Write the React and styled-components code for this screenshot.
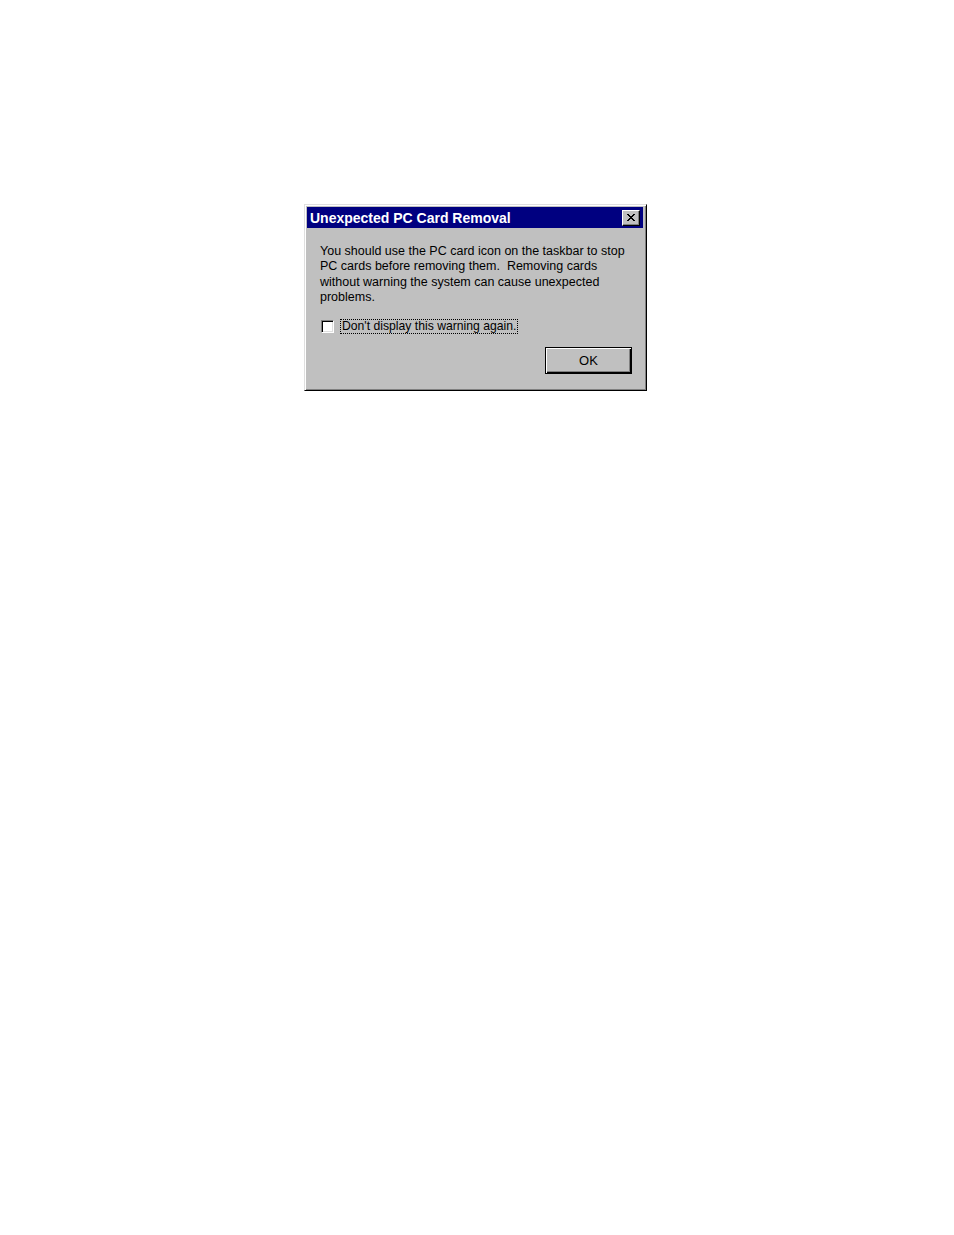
import React from 'react';
import styled, { createGlobalStyle } from 'styled-components';

const GlobalStyle = createGlobalStyle`
  html, body {
    margin: 0;
    padding: 0;
    background: #ffffff;
  }
`;

const Page = styled.div`
  width: 954px;
  height: 1235px;
  padding: 204px 0 0 304px;
  box-sizing: border-box;
  font-family: "Liberation Sans", Arial, sans-serif;
`;

const Window = styled.div`
  width: 343px;
  height: 187px;
  box-sizing: border-box;
  background: #c0c0c0;
  border: 1px solid;
  border-color: #dfdfdf #000000 #000000 #dfdfdf;
  box-shadow: inset 1px 1px 0 #ffffff, inset -1px -1px 0 #808080;
  padding: 2px 3px 3px 2px;
  display: flex;
  flex-direction: column;
`;

const TitleBar = styled.div`
  height: 21px;
  background: #000080;
  display: flex;
  align-items: center;
  justify-content: space-between;
  padding: 0 3px;
`;

const Title = styled.span`
  color: #ffffff;
  font-weight: bold;
  font-size: 14px;
`;

const CloseButton = styled.div`
  width: 18px;
  height: 16px;
  box-sizing: border-box;
  background: #c0c0c0;
  border: 1px solid;
  border-color: #ffffff #000000 #000000 #ffffff;
  box-shadow: inset -1px -1px 0 #808080;
  display: flex;
  align-items: center;
  justify-content: center;
`;

const Body = styled.div`
  flex: 1;
  display: flex;
  flex-direction: column;
  padding: 16px 0 0 13px;
`;

const Message = styled.p`
  margin: 0;
  width: 316px;
  font-size: 12.5px;
  line-height: 15.3px;
  color: #000000;
`;

const CheckRow = styled.label`
  display: flex;
  align-items: center;
  gap: 7px;
  margin-top: 15px;
  margin-left: 1px;
`;

const CheckBox = styled.span`
  width: 13px;
  height: 13px;
  box-sizing: border-box;
  background: #ffffff;
  border: 1px solid;
  border-color: #808080 #ffffff #ffffff #808080;
  box-shadow: inset 1px 1px 0 #000000, inset -1px -1px 0 #dfdfdf;
`;

const CheckLabel = styled.span`
  font-size: 12.2px;
  line-height: 13px;
  outline: 1px dotted #000000;
  padding: 0 1px;
`;

const ButtonRow = styled.div`
  display: flex;
  justify-content: flex-end;
  margin-top: 14px;
  padding-right: 11px;
`;

const DefaultButton = styled.button`
  width: 87px;
  height: 27px;
  box-sizing: border-box;
  background: #c0c0c0;
  border: 1px solid #000000;
  padding: 0;
  font-family: "Liberation Sans", Arial, sans-serif;
  font-size: 13px;
  color: #000000;
  box-shadow: inset 1px 1px 0 #ffffff, inset -1px -1px 0 #000000, inset -2px -2px 0 #808080;
`;

const X_ROWS = [
  'XX....XX',
  '.XX..XX.',
  '..XXXX..',
  '...XX...',
  '..XXXX..',
  '.XX..XX.',
  'XX....XX',
];

function CloseIcon() {
  return (
    <svg width="8" height="7" viewBox="0 0 8 7" shapeRendering="crispEdges">
      {X_ROWS.flatMap((row, y) =>
        row.split('').map((c, x) =>
          c === 'X' ? <rect key={`${x}-${y}`} x={x} y={y} width="1" height="1" fill="#000000" /> : null
        )
      )}
    </svg>
  );
}

export default function App() {
  return (
    <>
      <GlobalStyle />
      <Page>
        <Window>
          <TitleBar>
            <Title>Unexpected PC Card Removal</Title>
            <CloseButton>
              <CloseIcon />
            </CloseButton>
          </TitleBar>
          <Body>
            <Message>
              You should use the PC card icon on the taskbar to stop PC cards before removing them.&nbsp; Removing cards
              without warning the system can cause unexpected problems.
            </Message>
            <CheckRow>
              <CheckBox />
              <CheckLabel>Don't display this warning again.</CheckLabel>
            </CheckRow>
            <ButtonRow>
              <DefaultButton>OK</DefaultButton>
            </ButtonRow>
          </Body>
        </Window>
      </Page>
    </>
  );
}
